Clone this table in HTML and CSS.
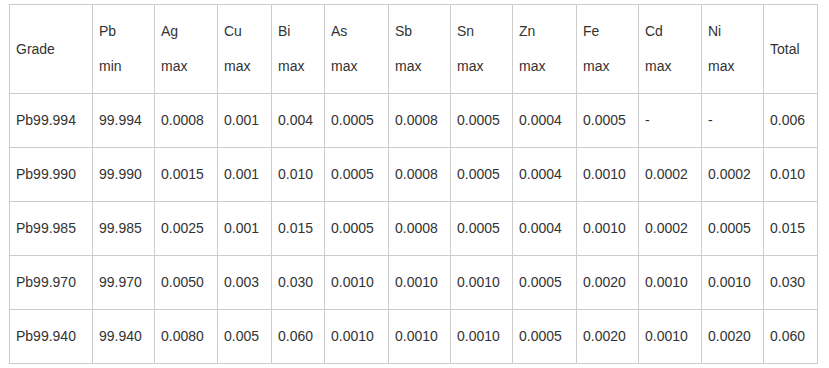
FILE: index.html
```html
<!DOCTYPE html>
<html>
<head>
<meta charset="utf-8">
<link rel="stylesheet" href="styles.css">
</head>
<body>
<div class="wrap">
<table class="spec">
<colgroup>
<col class="c83"><col class="c62"><col class="c63"><col class="c54"><col class="c53"><col class="c64"><col class="c62"><col class="c62"><col class="c64"><col class="c62"><col class="c63"><col class="c62"><col class="c54">
</colgroup>
<thead>
<tr>
<td>Grade</td>
<td>Pb<br>min</td>
<td>Ag<br>max</td>
<td>Cu<br>max</td>
<td>Bi<br>max</td>
<td>As<br>max</td>
<td>Sb<br>max</td>
<td>Sn<br>max</td>
<td>Zn<br>max</td>
<td>Fe<br>max</td>
<td>Cd<br>max</td>
<td>Ni<br>max</td>
<td>Total</td>
</tr>
</thead>
<tbody>
<tr><td>Pb99.994</td><td>99.994</td><td>0.0008</td><td>0.001</td><td>0.004</td><td>0.0005</td><td>0.0008</td><td>0.0005</td><td>0.0004</td><td>0.0005</td><td>-</td><td>-</td><td>0.006</td></tr>
<tr><td>Pb99.990</td><td>99.990</td><td>0.0015</td><td>0.001</td><td>0.010</td><td>0.0005</td><td>0.0008</td><td>0.0005</td><td>0.0004</td><td>0.0010</td><td>0.0002</td><td>0.0002</td><td>0.010</td></tr>
<tr><td>Pb99.985</td><td>99.985</td><td>0.0025</td><td>0.001</td><td>0.015</td><td>0.0005</td><td>0.0008</td><td>0.0005</td><td>0.0004</td><td>0.0010</td><td>0.0002</td><td>0.0005</td><td>0.015</td></tr>
<tr><td>Pb99.970</td><td>99.970</td><td>0.0050</td><td>0.003</td><td>0.030</td><td>0.0010</td><td>0.0010</td><td>0.0010</td><td>0.0005</td><td>0.0020</td><td>0.0010</td><td>0.0010</td><td>0.030</td></tr>
<tr><td>Pb99.940</td><td>99.940</td><td>0.0080</td><td>0.005</td><td>0.060</td><td>0.0010</td><td>0.0010</td><td>0.0010</td><td>0.0005</td><td>0.0020</td><td>0.0010</td><td>0.0020</td><td>0.060</td></tr>
</tbody>
</table>
</div>
</body>
</html>
```
FILE: styles.css
```css
html, body {
  margin: 0;
  padding: 0;
  background: #fff;
}
.wrap {
  padding: 4px 0 0 9px;
}
.spec {
  border-collapse: collapse;
  table-layout: fixed;
  width: 809px;
  font-family: "Liberation Sans", Arial, sans-serif;
  font-size: 14px;
  color: #333;
}
.spec td {
  border: 1px solid #ccc;
  padding: 9px 6px;
  line-height: 35px;
  vertical-align: middle;
  text-align: left;
  white-space: nowrap;
  overflow: hidden;
}
.c83 { width: 83px; }
.c62 { width: 62px; }
.c63 { width: 63px; }
.c64 { width: 64px; }
.c54 { width: 54px; }
.c53 { width: 53px; }
```
